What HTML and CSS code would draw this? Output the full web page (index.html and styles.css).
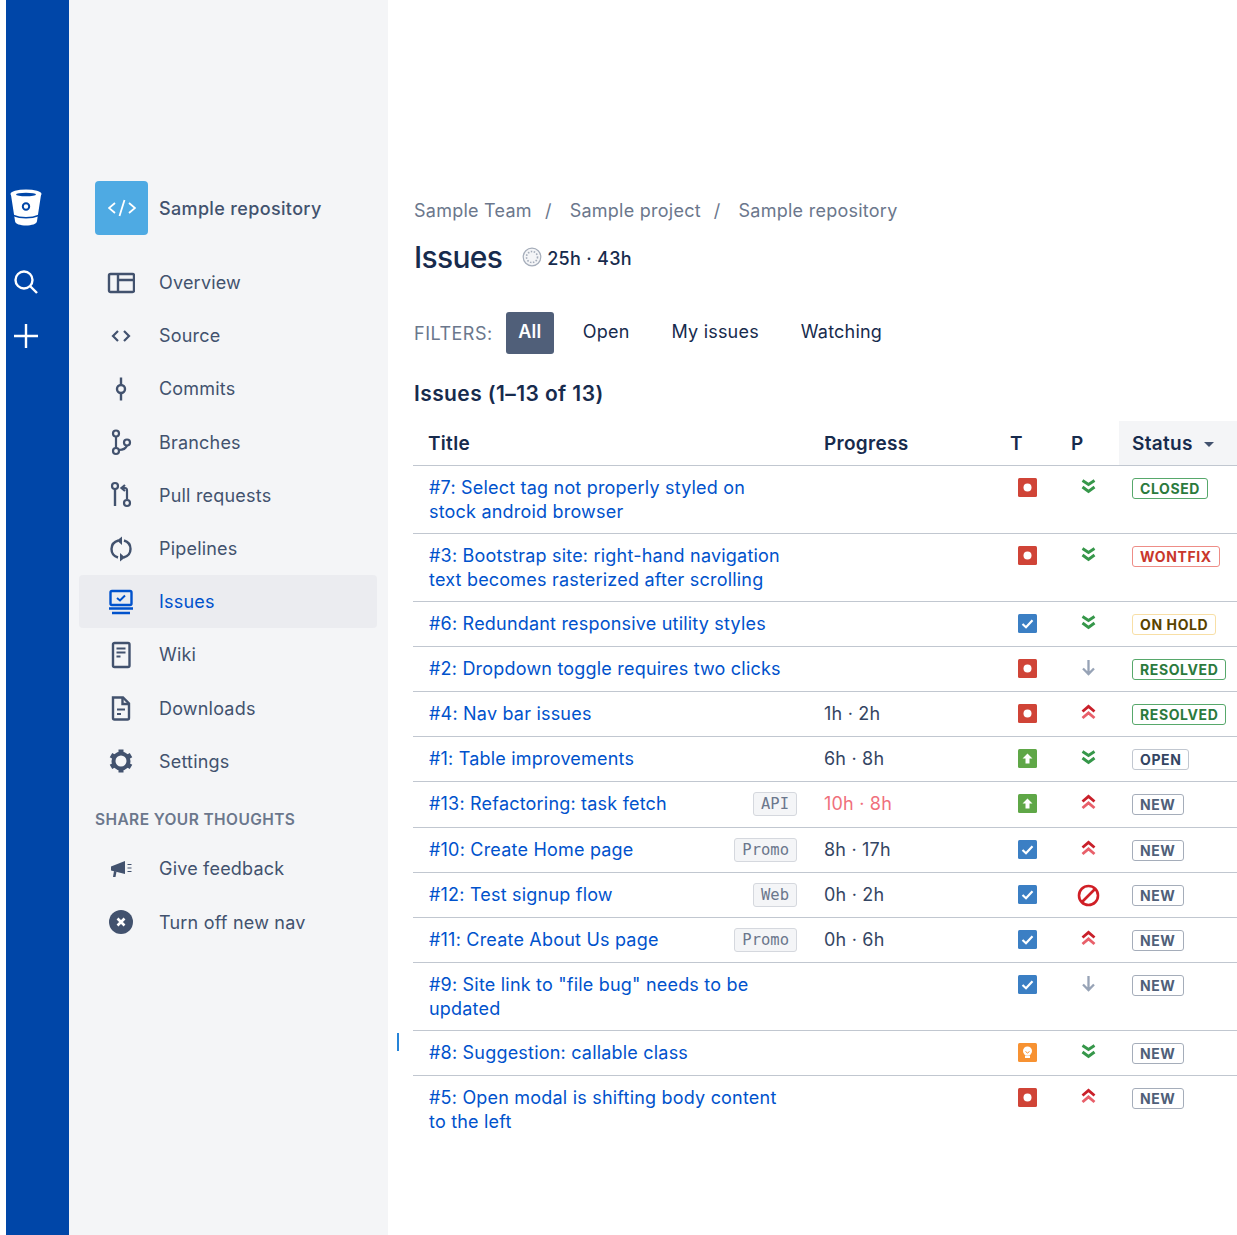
FILE: index.html
```html
<!DOCTYPE html>
<html lang="en">
<head>
    <meta charset="UTF-8">
    <title>Issues</title>
    <link rel="stylesheet" href="styles.css">
</head>
<body>
    <svg class="defs" width="0" height="0">
        <symbol id="t-bug" viewBox="0 0 19 19"><rect width="19" height="19" rx="1.5" fill="#d04437"/><circle cx="9.5" cy="9.5" r="4" fill="#fff"/></symbol>
        <symbol id="t-task" viewBox="0 0 19 19"><rect width="19" height="19" rx="1.5" fill="#3b7fc4"/><path d="M4.5 10l3.5 3.2 6.5-7" fill="none" stroke="#fff" stroke-width="2.2"/></symbol>
        <symbol id="t-up" viewBox="0 0 19 19"><rect width="19" height="19" rx="1.5" fill="#5fa747"/><path d="M9.5 4.5l5 5h-3v5h-4v-5h-3z" fill="#fff"/></symbol>
        <symbol id="t-idea" viewBox="0 0 19 19"><rect width="19" height="19" rx="1.5" fill="#f79232"/><circle cx="9.5" cy="8" r="4.5" fill="#fff"/><rect x="7" y="12.5" width="5" height="2.5" fill="#fff"/><path d="M7.5 8.5l2 1.5 2-1.5" fill="none" stroke="#f79232"/></symbol>
        <symbol id="p-low" viewBox="0 0 17 17"><path d="M2.5 2.5l6 4 6-4M2.5 9l6 4.5 6-4.5" fill="none" stroke="#36974a" stroke-width="2.9"/></symbol>
        <symbol id="p-high" viewBox="0 0 17 17"><path d="M2.5 7.5l6-5 6 5" fill="none" stroke="#c9202a" stroke-width="2.9"/><path d="M2.5 14l6-5 6 5" fill="none" stroke="#e8606a" stroke-width="2.9"/></symbol>
        <symbol id="p-down" viewBox="0 0 17 17"><path d="M8.500 1v14M3 9.500l5.500 5.500 5.500-5.500" fill="none" stroke="#97a3b6" stroke-width="2.300"/></symbol>
        <symbol id="p-block" viewBox="0 0 23 23"><circle cx="11.500" cy="11.500" r="9.500" fill="none" stroke="#d01f26" stroke-width="2.600"/><path d="M5 18L18 5" stroke="#d01f26" stroke-width="2.600"/></symbol>
    </svg>

    <div class="rail">
        <svg class="rail-logo" viewBox="0 0 32 38" width="32" height="38">
            <path d="M1 6l4 26c0 6 22 6 22 0l4-26z" fill="#fff"/>
            <ellipse cx="16" cy="5" rx="15.500" ry="4.500" fill="#fff"/>
            <ellipse cx="16" cy="5.500" rx="10" ry="1.800" fill="#0046a8"/>
            <circle cx="16" cy="17.500" r="3.200" fill="none" stroke="#0046a8" stroke-width="2"/>
            <path d="M3.500 26.500c7 3 18 3 25 0" fill="none" stroke="#0046a8" stroke-width="1.600"/>
        </svg>
        <svg class="rail-search" viewBox="0 0 26 26" width="26" height="26">
            <circle cx="11" cy="11" r="8.500" fill="none" stroke="#fff" stroke-width="2.400"/>
            <path d="M17 17l7 7" stroke="#fff" stroke-width="2.400"/>
        </svg>
        <svg class="rail-plus" viewBox="0 0 26 26" width="26" height="26">
            <path d="M13 1v24M1 13h24" stroke="#fff" stroke-width="2.400"/>
        </svg>
    </div>

    <aside class="sidebar">
        <div class="repo">
            <div class="repo-tile">
                <svg viewBox="0 0 28 18" width="28" height="18"><path d="M7 4l-6 5 6 5M21 4l6 5-6 5M16.500 1l-5 16" fill="none" stroke="#fff" stroke-width="1.800"/></svg>
            </div>
            <span class="repo-name">Sample repository</span>
        </div>

        <nav class="nav">
            <a class="nav-item">
                <svg class="nav-icon" viewBox="0 0 28 28"><rect x="2" y="5" width="25" height="18" rx="1.500" fill="none" stroke="#42526e" stroke-width="2.400"/><path d="M11 5v18M11 11h16" fill="none" stroke="#42526e" stroke-width="2.400"/></svg>
                Overview
            </a>
            <a class="nav-item">
                <svg class="nav-icon" viewBox="0 0 28 28"><path d="M11 9l-5 5 5 5M17 9l5 5-5 5" fill="none" stroke="#42526e" stroke-width="2.200"/></svg>
                Source
            </a>
            <a class="nav-item">
                <svg class="nav-icon" viewBox="0 0 28 28"><path d="M14 2.500v7.500M14 18v7.500" stroke="#42526e" stroke-width="2.400"/><circle cx="14" cy="14" r="4" fill="none" stroke="#42526e" stroke-width="2.400"/></svg>
                Commits
            </a>
            <a class="nav-item">
                <svg class="nav-icon" viewBox="0 0 28 28"><circle cx="9" cy="5.500" r="3" fill="none" stroke="#42526e" stroke-width="2.200"/><circle cx="9" cy="23" r="3" fill="none" stroke="#42526e" stroke-width="2.200"/><circle cx="20" cy="14.500" r="3" fill="none" stroke="#42526e" stroke-width="2.200"/><path d="M9 8.500v11.500M12 22c5 0 7-2 8-4.500" fill="none" stroke="#42526e" stroke-width="2.200"/></svg>
                Branches
            </a>
            <a class="nav-item">
                <svg class="nav-icon" viewBox="0 0 28 28"><circle cx="8" cy="5" r="3" fill="none" stroke="#42526e" stroke-width="2.200"/><path d="M8 8v17" stroke="#42526e" stroke-width="2.400"/><path d="M18 4l-3.500 3 3.500 3M15 7h3c1.500 0 2 1 2 2.500V18" fill="none" stroke="#42526e" stroke-width="2.200"/><circle cx="20" cy="22" r="3" fill="none" stroke="#42526e" stroke-width="2.200"/></svg>
                Pull requests
            </a>
            <a class="nav-item">
                <svg class="nav-icon" viewBox="0 0 28 28"><path d="M11.500 5.500C2 8 2.500 20 11 22.500M16.500 22.500C26 20 25.500 8 17 5.500" fill="none" stroke="#42526e" stroke-width="2.400"/><path d="M15 1.500v8.500l-5-4.500zM13 26.500V18l5 4.500z" fill="#42526e"/></svg>
                Pipelines
            </a>
            <a class="nav-item is-active">
                <svg class="nav-icon" viewBox="0 0 28 28"><rect x="3.500" y="3" width="21" height="14" rx="1.500" fill="none" stroke="#0052cc" stroke-width="2.400"/><path d="M10 10l3 2.500 5-5" fill="none" stroke="#0052cc" stroke-width="2"/><path d="M2 20.500h24M5 25h18" stroke="#0052cc" stroke-width="2.400"/></svg>
                Issues
            </a>
            <a class="nav-item">
                <svg class="nav-icon" viewBox="0 0 28 28"><rect x="6" y="2" width="16.500" height="24" rx="1.500" fill="none" stroke="#42526e" stroke-width="2.400"/><path d="M9.500 7.500h9M9.500 11.500h9M9.500 15.500h4" stroke="#42526e" stroke-width="2"/></svg>
                Wiki
            </a>
            <a class="nav-item">
                <svg class="nav-icon" viewBox="0 0 28 28"><path d="M6 3.500h10l6 6V24a1.500 1.500 0 0 1-1.500 1.500h-13A1.500 1.500 0 0 1 6 24z" fill="none" stroke="#42526e" stroke-width="2.400"/><path d="M15.500 3.500v6.500H22" fill="none" stroke="#42526e" stroke-width="2.400"/><path d="M10 15.500h8M10 20h4" stroke="#42526e" stroke-width="2"/></svg>
                Downloads
            </a>
            <a class="nav-item">
                <svg class="nav-icon" viewBox="0 0 28 28"><circle cx="14" cy="14" r="7.500" fill="none" stroke="#42526e" stroke-width="4"/><path d="M14 2.500v5M14 20.500v5M4 8.200l4.300 2.500M19.700 17.300l4.300 2.500M4 19.800l4.300-2.500M19.700 10.700l4.300-2.500" stroke="#42526e" stroke-width="5"/></svg>
                Settings
            </a>
        </nav>

        <div class="nav-label">SHARE YOUR THOUGHTS</div>
        <nav class="nav">
            <a class="nav-item">
                <svg class="nav-icon" viewBox="0 0 28 28"><path d="M4 11.500l14-5.500v13L4 15.500z" fill="#42526e"/><path d="M7 16l-1 6h2.500l1-5.500z" fill="#42526e"/><path d="M20.500 9.500h4M20.500 13h4M20.500 16.500h4" stroke="#42526e" stroke-width="1"/></svg>
                Give feedback
            </a>
            <a class="nav-item">
                <svg class="nav-icon" viewBox="0 0 28 28"><circle cx="14" cy="14" r="12" fill="#42526e"/><path d="M10.500 10.500l7 7M17.500 10.500l-7 7" stroke="#fff" stroke-width="2.600"/></svg>
                Turn off new nav
            </a>
        </nav>
    </aside>

    <main class="main">
        <div class="crumbs">
            <span>Sample Team</span><span class="crumb-sep">/</span>
            <span>Sample project</span><span class="crumb-sep">/</span>
            <span>Sample repository</span>
        </div>

        <div class="title-row">
            <h1>Issues</h1>
            <svg class="time-icon" viewBox="0 0 20 20" width="20" height="20"><circle cx="10" cy="10" r="8.800" fill="#f4f5f7" stroke="#a5adba" stroke-width="1.200"/><circle cx="10" cy="10" r="5.500" fill="none" stroke="#a5adba" stroke-width="1.600" stroke-dasharray="1.500 1.500"/></svg>
            <span class="time-total">25h · 43h</span>
        </div>

        <div class="filters">
            <span class="filters-label">FILTERS:</span>
            <a class="filter is-on">All</a>
            <a class="filter">Open</a>
            <a class="filter">My issues</a>
            <a class="filter">Watching</a>
        </div>

        <h2>Issues (1–13 of 13)</h2>

        <table class="issues">
            <colgroup>
                <col class="col-title"><col class="col-progress"><col class="col-t"><col class="col-p"><col class="col-status">
            </colgroup>
            <thead>
                <tr>
                    <th class="th-title">Title</th>
                    <th>Progress</th>
                    <th class="th-type">T</th>
                    <th class="th-type">P</th>
                    <th class="th-status">Status <span class="caret"></span></th>
                </tr>
            </thead>
            <tbody>
                <tr>
                    <td><div class="title-cell"><a class="issue">#7: Select tag not properly styled on stock android browser</a></div></td>
                    <td></td>
                    <td class="t"><svg><use href="#t-bug"/></svg></td>
                    <td class="p"><svg><use href="#p-low"/></svg></td>
                    <td><span class="loz loz-green">CLOSED</span></td>
                </tr>
                <tr>
                    <td><div class="title-cell"><a class="issue">#3: Bootstrap site: right-hand navigation text becomes rasterized after scrolling</a></div></td>
                    <td></td>
                    <td class="t"><svg><use href="#t-bug"/></svg></td>
                    <td class="p"><svg><use href="#p-low"/></svg></td>
                    <td><span class="loz loz-red">WONTFIX</span></td>
                </tr>
                <tr>
                    <td><div class="title-cell"><a class="issue">#6: Redundant responsive utility styles</a></div></td>
                    <td></td>
                    <td class="t"><svg><use href="#t-task"/></svg></td>
                    <td class="p"><svg><use href="#p-low"/></svg></td>
                    <td><span class="loz loz-yellow">ON HOLD</span></td>
                </tr>
                <tr>
                    <td><div class="title-cell"><a class="issue">#2: Dropdown toggle requires two clicks</a></div></td>
                    <td></td>
                    <td class="t"><svg><use href="#t-bug"/></svg></td>
                    <td class="p"><svg><use href="#p-down"/></svg></td>
                    <td><span class="loz loz-green">RESOLVED</span></td>
                </tr>
                <tr>
                    <td><div class="title-cell"><a class="issue">#4: Nav bar issues</a></div></td>
                    <td>1h · 2h</td>
                    <td class="t"><svg><use href="#t-bug"/></svg></td>
                    <td class="p"><svg><use href="#p-high"/></svg></td>
                    <td><span class="loz loz-green">RESOLVED</span></td>
                </tr>
                <tr>
                    <td><div class="title-cell"><a class="issue">#1: Table improvements</a></div></td>
                    <td>6h · 8h</td>
                    <td class="t"><svg><use href="#t-up"/></svg></td>
                    <td class="p"><svg><use href="#p-low"/></svg></td>
                    <td><span class="loz loz-dark">OPEN</span></td>
                </tr>
                <tr class="row-tall">
                    <td><div class="title-cell"><a class="issue">#13: Refactoring: task fetch</a><span class="tag">API</span></div></td>
                    <td class="over">10h · 8h</td>
                    <td class="t"><svg><use href="#t-up"/></svg></td>
                    <td class="p"><svg><use href="#p-high"/></svg></td>
                    <td><span class="loz loz-blue">NEW</span></td>
                </tr>
                <tr>
                    <td><div class="title-cell"><a class="issue">#10: Create Home page</a><span class="tag">Promo</span></div></td>
                    <td>8h · 17h</td>
                    <td class="t"><svg><use href="#t-task"/></svg></td>
                    <td class="p"><svg><use href="#p-high"/></svg></td>
                    <td><span class="loz loz-blue">NEW</span></td>
                </tr>
                <tr>
                    <td><div class="title-cell"><a class="issue">#12: Test signup flow</a><span class="tag">Web</span></div></td>
                    <td>0h · 2h</td>
                    <td class="t"><svg><use href="#t-task"/></svg></td>
                    <td class="p"><svg class="block"><use href="#p-block"/></svg></td>
                    <td><span class="loz loz-blue">NEW</span></td>
                </tr>
                <tr>
                    <td><div class="title-cell"><a class="issue">#11: Create About Us page</a><span class="tag">Promo</span></div></td>
                    <td>0h · 6h</td>
                    <td class="t"><svg><use href="#t-task"/></svg></td>
                    <td class="p"><svg><use href="#p-high"/></svg></td>
                    <td><span class="loz loz-blue">NEW</span></td>
                </tr>
                <tr>
                    <td><div class="title-cell"><a class="issue">#9: Site link to "file bug" needs to be updated</a></div></td>
                    <td></td>
                    <td class="t"><svg><use href="#t-task"/></svg></td>
                    <td class="p"><svg><use href="#p-down"/></svg></td>
                    <td><span class="loz loz-blue">NEW</span></td>
                </tr>
                <tr>
                    <td><div class="title-cell"><a class="issue">#8: Suggestion: callable class</a></div></td>
                    <td></td>
                    <td class="t"><svg><use href="#t-idea"/></svg></td>
                    <td class="p"><svg><use href="#p-low"/></svg></td>
                    <td><span class="loz loz-blue">NEW</span></td>
                </tr>
                <tr>
                    <td><div class="title-cell"><a class="issue">#5: Open modal is shifting body content to the left</a></div></td>
                    <td></td>
                    <td class="t"><svg><use href="#t-bug"/></svg></td>
                    <td class="p"><svg><use href="#p-high"/></svg></td>
                    <td><span class="loz loz-blue">NEW</span></td>
                </tr>
            </tbody>
        </table>
    </main>

    <div class="resize-mark"></div>
</body>
</html>
```

FILE: styles.css
```css
html, body {
    height: 100%;
}

body {
    font-family: Inter, "Liberation Sans", sans-serif;
    font-size: 18px;
    letter-spacing: 0.2px;
    margin: 0;
    padding-left: 6px;
    display: flex;
    height: 1235px;
    overflow: hidden;
    background-color: #fff;
    color: #172b4d;
}

.defs {
    position: absolute;
}

.rail {
    width: 63px;
    flex: none;
    background-color: #0046a8;
    display: flex;
    flex-direction: column;
    padding: 189px 0 0 4px;
    box-sizing: border-box;
}

.rail-search {
    margin: 42px 0 0 3px;
}

.rail-plus {
    margin: 28px 0 0 3px;
}

.sidebar {
    width: 319px;
    flex: none;
    background-color: #f4f5f7;
    box-sizing: border-box;
    padding: 181px 11px 0 10px;
    color: #42526e;
}

.repo {
    display: flex;
    align-items: center;
    gap: 11px;
    padding-left: 16px;
    margin-bottom: 21px;
}

.repo-tile {
    width: 53px;
    height: 54px;
    border-radius: 4px;
    background-color: #4eaae3;
    display: flex;
    align-items: center;
    justify-content: center;
}

.repo-name {
    font-weight: 500;
    letter-spacing: 0.35px;
}

.nav-item {
    display: flex;
    align-items: center;
    gap: 24px;
    height: 53.2px;
    padding-left: 28px;
    border-radius: 4px;
}

.nav-item.is-active {
    background-color: #ebecf0;
    color: #0052cc;
}

.nav-icon {
    width: 28px;
    height: 28px;
    flex: none;
}

.nav-label {
    font-size: 15.5px;
    font-weight: 600;
    letter-spacing: 0.4px;
    color: #6b778c;
    padding-left: 16px;
    margin: 22px 0 12.5px;
    line-height: 20px;
}

.main {
    flex: 1;
    padding: 199px 0 0 26px;
    min-width: 0;
}

.crumbs {
    color: #6b778c;
    line-height: 24px;
    letter-spacing: 0.25px;
    display: flex;
}

.crumb-sep {
    margin: 0 18px 0 13px;
}

.title-row {
    display: flex;
    align-items: center;
    margin-top: 14px;
    height: 40px;
}

h1 {
    font-size: 30px;
    font-weight: 500;
    letter-spacing: -0.7px;
    margin: 0 20px 0 0;
}

.time-total {
    font-weight: 500;
    margin-left: 5px;
    padding-top: 2px;
    letter-spacing: 0.3px;
}

.filters {
    display: flex;
    align-items: center;
    gap: 16px;
    margin-top: 35px;
}

.filters-label {
    color: #6b778c;
    font-size: 18px;
    letter-spacing: 0.5px;
    margin-right: -3px;
}

.filter {
    padding: 0 13px;
    height: 42px;
    line-height: 40px;
    border-radius: 3px;
}

.filter.is-on {
    background-color: #505f79;
    color: #fff;
    font-weight: 600;
    padding: 0 12.5px;
}

h2 {
    font-size: 21px;
    font-weight: 600;
    letter-spacing: 0.4px;
    line-height: 24px;
    margin: 28px 0 15px;
}

.issues {
    width: 824px;
    margin-left: -1px;
    table-layout: fixed;
    border-collapse: collapse;
}

.col-title { width: 395px; }
.col-progress { width: 187px; }
.col-t { width: 61px; }
.col-p { width: 63px; }
.col-status { width: 118px; }

th {
    text-align: left;
    font-size: 19px;
    font-weight: 600;
    letter-spacing: 0.3px;
    padding: 11px 16px 9px;
    height: 24px;
    line-height: 24px;
    border-bottom: 1px solid #c1c7d0;
}

th.th-title {
    padding-left: 15px;
}

th.th-type {
    padding-left: 15px;
}

th.th-status {
    background-color: #f4f5f7;
    padding-left: 13px;
}

.caret {
    display: inline-block;
    border: 5px solid transparent;
    border-top-color: #42526e;
    border-bottom-width: 0;
    margin-left: 6px;
    vertical-align: 3px;
}

td {
    vertical-align: top;
    padding: 10px 0 9px 16px;
    height: 25px;
    line-height: 24px;
    border-bottom: 1px solid #c1c7d0;
    color: #344563;
}

tbody tr:last-child td {
    border-bottom: none;
}

.row-tall td {
    height: 26px;
}

td:last-child {
    padding-left: 13px;
    padding-right: 0;
    white-space: nowrap;
}

.title-cell {
    display: flex;
    justify-content: space-between;
    align-items: flex-start;
    padding-right: 11px;
}

.issue {
    color: #0052cc;
    max-width: 360px;
}

.tag {
    font-family: "DejaVu Sans Mono", monospace;
    font-size: 15.5px;
    letter-spacing: 0;
    line-height: 22px;
    color: #6b778c;
    background-color: #f4f5f7;
    border: 1px solid #d5d8de;
    border-radius: 3px;
    padding: 0 7px;
    flex: none;
}

.over {
    color: #f0707c;
}

.t svg {
    display: block;
    width: 19px;
    height: 19px;
    margin: 2px 0 0 7px;
}

.p svg {
    display: block;
    width: 17px;
    height: 17px;
    margin: 2px 0 0 8px;
}

.p svg.block {
    width: 23px;
    height: 23px;
    margin: 1px 0 0 5px;
}

.loz {
    display: inline-block;
    font-size: 14px;
    font-weight: 700;
    letter-spacing: 0.6px;
    line-height: 19px;
    border: 1px solid;
    border-radius: 3px;
    padding: 0 7px;
}

.loz-green { color: #2b7a3d; border-color: #57a86b; }
.loz-red { color: #c9372c; border-color: #ee8d87; }
.loz-yellow { color: #594300; border-color: #f8dfa6; }
.loz-dark { color: #344563; border-color: #c1c7d0; }
.loz-blue { color: #505f79; border-color: #a5adba; }

.resize-mark {
    position: absolute;
    left: 397px;
    top: 1033px;
    width: 2px;
    height: 18px;
    background-color: #2684d8;
}
```
